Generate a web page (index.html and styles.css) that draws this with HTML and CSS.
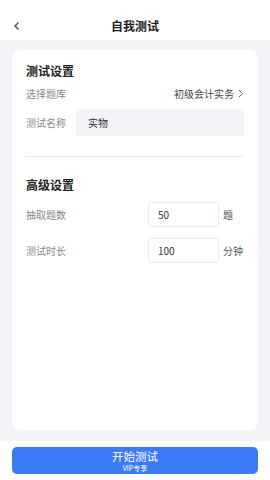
FILE: index.html
```html
<!DOCTYPE html>
<html lang="zh">
<head>
    <meta charset="UTF-8">
    <title>自我测试</title>
    <link rel="stylesheet" href="styles.css">
</head>
<body>
    <header class="barra">
        <svg class="volver" width="8" height="10" viewBox="0 0 8 10">
            <path d="M5.5 1.5 L2 5 L5.5 8.5" fill="none" stroke="#444" stroke-width="1.3"/>
        </svg>
        <h1>自我测试</h1>
    </header>

    <main class="fondo">
        <div class="tarjeta">
            <h2 class="titulo-seccion">测试设置</h2>
            <div class="fila fila-banco">
                <span class="etiqueta">选择题库</span>
                <span class="valor">初级会计实务
                    <svg width="6" height="9" viewBox="0 0 6 9"><path d="M1 1 L4.5 4.5 L1 8" fill="none" stroke="#666" stroke-width="1"/></svg>
                </span>
            </div>
            <div class="fila fila-nombre">
                <span class="etiqueta ancho">测试名称</span>
                <div class="caja-nombre">实物</div>
            </div>

            <div class="divisor"></div>

            <h2 class="titulo-seccion seccion2">高级设置</h2>
            <div class="fila fila-num primera">
                <span class="etiqueta">抽取题数</span>
                <div class="caja-num">50</div>
                <span class="unidad">题</span>
            </div>
            <div class="fila fila-num segunda">
                <span class="etiqueta">测试时长</span>
                <div class="caja-num">100</div>
                <span class="unidad">分钟</span>
            </div>
        </div>
    </main>

    <footer class="pie">
        <button class="boton-empezar">
            <span class="texto-boton">开始测试</span>
            <span class="vip">VIP专享</span>
        </button>
    </footer>
</body>
</html>
```

FILE: styles.css
```css
body {
    margin: 0;
    font-family: "Noto Sans CJK SC", "Noto Sans", sans-serif;
    background-color: #ffffff;
    color: #333;
}

.barra {
    height: 40px;
    display: flex;
    align-items: center;
    justify-content: center;
    position: relative;
    background-color: #fff;
}
.barra h1 {
    margin: 0;
    font-size: 12px;
    font-weight: bold;
    color: #222;
    padding-top: 11px;
}
.volver {
    position: absolute;
    left: 13px;
    top: 21px;
}

.fondo {
    background-color: #f3f4f8;
    padding: 10px 12px 11px;
}

.tarjeta {
    background-color: #fff;
    border-radius: 8px;
    height: 380px;
    box-sizing: border-box;
    padding: 13px 14px 0;
}

.titulo-seccion {
    margin: 0;
    font-size: 12px;
    line-height: 16px;
    font-weight: bold;
    color: #222;
}
.seccion2 {
    margin-top: 20px;
}

.fila {
    display: flex;
    align-items: center;
    font-size: 10px;
}
.etiqueta {
    color: #8a8a8a;
}
.ancho {
    width: 50px;
    flex-shrink: 0;
}

.fila-banco {
    margin-top: 6px;
    height: 16px;
    justify-content: space-between;
}
.valor {
    color: #444;
    display: flex;
    align-items: center;
    gap: 4px;
}

.fila-nombre {
    margin-top: 8px;
}
.caja-nombre {
    flex: 1;
    height: 27px;
    line-height: 27px;
    background-color: #f3f4f7;
    border-radius: 2px;
    padding-left: 12px;
    color: #333;
}

.divisor {
    margin-top: 20px;
    height: 1px;
    background-color: #ececec;
}

.fila-num .etiqueta {
    width: 122px;
}
.primera {
    margin-top: 9px;
}
.segunda {
    margin-top: 11px;
}
.caja-num {
    width: 71px;
    height: 25px;
    box-sizing: border-box;
    border: 1px solid #ebebeb;
    border-radius: 3px;
    line-height: 23px;
    padding-left: 9px;
    color: #333;
}
.unidad {
    margin-left: 4px;
    color: #555;
}

.pie {
    padding: 6px 12px 0;
}
.boton-empezar {
    width: 100%;
    height: 27px;
    border: none;
    border-radius: 5px;
    background-color: #3b7cf6;
    color: #fff;
    font-family: inherit;
    display: flex;
    flex-direction: column;
    align-items: center;
    justify-content: center;
    padding: 0;
}
.texto-boton {
    display: block;
    font-size: 11.5px;
    line-height: 14px;
}
.vip {
    display: block;
    font-size: 7px;
    line-height: 10px;
}
```
